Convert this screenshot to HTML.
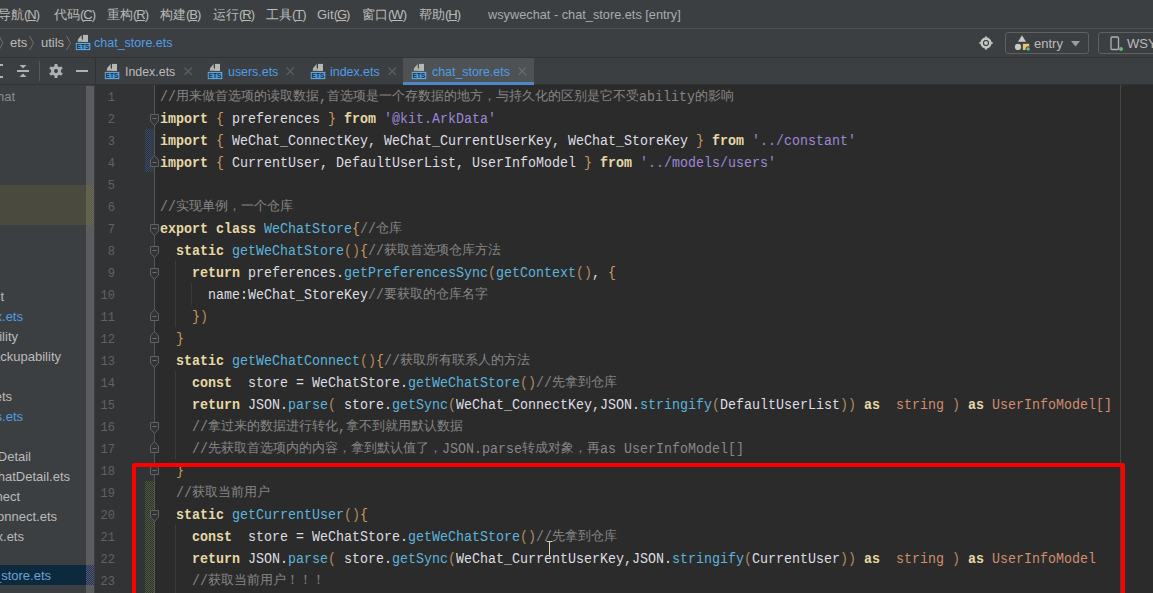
<!DOCTYPE html>
<html><head><meta charset="utf-8">
<style>
*{margin:0;padding:0;box-sizing:border-box}
html,body{width:1153px;height:593px;overflow:hidden;background:#3c3f41}
body{position:relative;font-family:"Liberation Sans",sans-serif;font-size:13px;color:#bbbbbb}
.a{position:absolute;white-space:pre}
.r{position:absolute}
.mi{top:7px;height:16px;line-height:16px;font-size:13px;color:#bbbbbb}
.mi span{letter-spacing:-1px}
.cl{position:absolute;left:0;width:1153px;height:22px}
.cl .a{top:1px;height:22px;line-height:22px;font-family:"Liberation Mono",monospace;font-size:13.333px;letter-spacing:0;transform:scaleY(1.14);transform-origin:0 14.5px}
.ln{position:absolute;margin-top:1px;left:90px;width:25px;height:22px;line-height:22px;text-align:right;font-family:"Liberation Mono",monospace;font-size:12px;color:#606366}
.i{color:#dcdee2}
.c{color:#868686}
.k{color:#e6d9a6;font-weight:bold}
.b{color:#cf9a5b}
.p{color:#b58a5e}
.s{color:#9d87d8}
.f{color:#5cb4dc}
.t{color:#cf8e6d}
.cl .cj{top:0;font-size:13px;font-weight:normal;letter-spacing:0;transform:none}
i{font-style:normal;display:inline-block;width:13px;text-align:left}
.tt{position:absolute;top:63px;height:18px;line-height:18px;font-size:12.4px;white-space:pre}
.pi{position:absolute;margin-top:1px;right:auto;height:20px;line-height:20px;font-size:13px;color:#bbbbbb;white-space:pre;text-align:right}
.blue{color:#4e9ee6}
svg{position:absolute;overflow:visible}
</style></head><body>
<svg width="0" height="0" style="left:0;top:0">
<defs>
<symbol id="ets" viewBox="0 0 16 17">
<path d="M3 5.2 L6.7 1 V5.3 H7.6 V6.1 H3 Z" fill="#b5b8b3"/>
<rect x="8" y="0.9" width="5" height="6.9" fill="#b5b8b3"/>
<rect x="2.8" y="6.1" width="10.2" height="1.7" fill="#b5b8b3"/>
<rect x="1.3" y="9.4" width="13.5" height="6.2" fill="#4b9ad8" stroke="#5cb0ec" stroke-width="1"/>
<text x="8" y="14.9" font-family="Liberation Sans" font-weight="bold" font-size="6.6" fill="#263040" text-anchor="middle">ETS</text>
</symbol>
<symbol id="fm-open" viewBox="0 0 10 12">
<path d="M0.5 0.5 H8.5 V7 L4.5 11.5 L0.5 7 Z" fill="#313335" stroke="#606264" stroke-width="1"/>
<path d="M2.5 4.5 H6.5" stroke="#6c6e70" stroke-width="1"/>
</symbol>
<symbol id="fm-close" viewBox="0 0 10 12">
<path d="M0.5 11.5 H8.5 V5 L4.5 0.5 L0.5 5 Z" fill="#313335" stroke="#606264" stroke-width="1"/>
<path d="M2.5 7.5 H6.5" stroke="#6c6e70" stroke-width="1"/>
</symbol>
</defs>
</svg>
<!-- menubar -->
<div class="r" style="left:0;top:0;width:1153px;height:28px;background:#3c3f41"></div>
<div class="r" style="left:0;top:28px;width:1153px;height:1px;background:#4d5052"></div>
<div class="r" style="left:0;top:57px;width:1153px;height:1px;background:#323232"></div>
<div class="a mi" style="left:-2px"><i>导</i><i>航</i><span>(<u>N</u>)</span></div>
<div class="a mi" style="left:54px"><i>代</i><i>码</i><span>(<u>C</u>)</span></div>
<div class="a mi" style="left:107px"><i>重</i><i>构</i><span>(<u>R</u>)</span></div>
<div class="a mi" style="left:160px"><i>构</i><i>建</i><span>(<u>B</u>)</span></div>
<div class="a mi" style="left:213px"><i>运</i><i>行</i><span>(<u>R</u>)</span></div>
<div class="a mi" style="left:266px"><i>工</i><i>具</i><span>(<u>T</u>)</span></div>
<div class="a mi" style="left:317px">Git<span>(<u>G</u>)</span></div>
<div class="a mi" style="left:362px"><i>窗</i><i>口</i><span>(<u>W</u>)</span></div>
<div class="a mi" style="left:419px"><i>帮</i><i>助</i><span>(<u>H</u>)</span></div>
<div class="a mi" style="left:488px;color:#a9abad;font-size:12.75px">wsywechat - chat_store.ets [entry]</div>
<!-- navbar -->
<svg style="left:0;top:35px" width="6" height="16"><path d="M-1 1 L3 8 L-1 15" fill="none" stroke="#6e7072" stroke-width="1"/></svg>
<div class="a" style="left:10px;top:35px;line-height:16px;color:#bbbbbb">ets</div>
<svg style="left:29px;top:35px" width="6" height="16"><path d="M0.5 1 L4.5 8 L0.5 15" fill="none" stroke="#6e7072" stroke-width="1"/></svg>
<div class="a" style="left:41px;top:35px;line-height:16px;color:#bbbbbb">utils</div>
<svg style="left:66px;top:35px" width="6" height="16"><path d="M0.5 1 L4.5 8 L0.5 15" fill="none" stroke="#6e7072" stroke-width="1"/></svg>
<svg style="left:75px;top:34px" width="16" height="17"><use href="#ets"/></svg>
<div class="a blue" style="left:94px;top:35px;line-height:16px;font-size:12.5px">chat_store.ets</div>
<!-- right nav items -->
<svg style="left:979px;top:36px" width="14" height="14" viewBox="0 0 14 14">
<circle cx="7" cy="7" r="4.3" fill="none" stroke="#c4c6c4" stroke-width="2.7"/>
<circle cx="7" cy="7" r="2.5" fill="none" stroke="#3a3a36" stroke-width="0.8"/>
<circle cx="7" cy="7" r="2" fill="#c4c6c4"/>
<path d="M7 0.2 V2 M7 12 V13.8 M0.2 7 H2 M12 7 H13.8" stroke="#c4c6c4" stroke-width="1.5"/>
</svg>
<div class="r" style="left:1005px;top:32px;width:84px;height:22px;border:1px solid #5e6062;border-radius:3px"></div>
<svg style="left:1014px;top:35px" width="18" height="17" viewBox="0 0 18 17">
<path d="M8 0.2 L12 6.7 H4 Z" fill="#c8cac8"/>
<circle cx="4" cy="11.9" r="3.1" fill="#c8cac8"/>
<rect x="8.9" y="8.8" width="6.3" height="6.2" fill="#f0c070"/>
<circle cx="14.1" cy="14" r="2.2" fill="#5fbf8a" stroke="#23282a" stroke-width="0.8"/>
</svg>
<div class="a" style="left:1034px;top:36px;line-height:16px;color:#bbbbbb">entry</div>
<svg style="left:1071px;top:41px" width="9" height="6"><path d="M0 0 H9 L4.5 5.5 Z" fill="#9a9c9e"/></svg>
<div class="r" style="left:1098px;top:32px;width:70px;height:22px;border:1px solid #5e6062;border-radius:3px"></div>
<svg style="left:1110px;top:36px" width="14" height="15" viewBox="0 0 14 15">
<rect x="1" y="1" width="7.5" height="12.5" rx="1" fill="none" stroke="#afb1b3" stroke-width="1.3"/>
<circle cx="11" cy="13" r="2" fill="#5fb878"/>
</svg>
<div class="a" style="left:1127px;top:36px;line-height:16px;color:#bbbbbb">WSY</div>
<!-- toolrow: project toolbar -->
<div class="r" style="left:-2px;top:64px;width:5px;height:2px;background:#afb1b3"></div>
<div class="r" style="left:-2px;top:76px;width:5px;height:2px;background:#afb1b3"></div>
<svg style="left:16px;top:64px" width="14" height="14" viewBox="0 0 14 14">
<path d="M3.5 1 H10.5 L7 4.5 Z" fill="#afb1b3"/>
<rect x="1" y="6" width="12" height="2" fill="#afb1b3"/>
<path d="M3.5 13 H10.5 L7 9.5 Z" fill="#afb1b3"/>
</svg>
<div class="r" style="left:39px;top:61px;width:1px;height:20px;background:#555758"></div>
<svg style="left:49px;top:64px" width="14" height="14" viewBox="0 0 14 14">
<g fill="#afb1b3"><circle cx="7" cy="7" r="5"/>
<rect x="5.5" y="0" width="3" height="14" rx="0.6"/>
<rect x="5.5" y="0" width="3" height="14" rx="0.6" transform="rotate(60 7 7)"/>
<rect x="5.5" y="0" width="3" height="14" rx="0.6" transform="rotate(120 7 7)"/></g>
<circle cx="7" cy="7" r="2" fill="#3c3f41"/>
</svg>
<div class="r" style="left:76px;top:70px;width:12px;height:2px;background:#afb1b3"></div>
<div class="r" style="left:95px;top:58px;width:1px;height:26px;background:#323232"></div>
<!-- tabs -->
<svg style="left:104px;top:63px" width="16" height="17"><use href="#ets"/></svg>
<div class="tt" style="left:125px;color:#bbbbbb">Index.ets</div>
<svg style="left:184px;top:67px" width="9" height="9"><path d="M0.5 0.5 L8 8 M8 0.5 L0.5 8" stroke="#5d5f61" stroke-width="1.1"/></svg>
<svg style="left:207px;top:63px" width="16" height="17"><use href="#ets"/></svg>
<div class="tt blue" style="left:228px">users.ets</div>
<svg style="left:286px;top:67px" width="9" height="9"><path d="M0.5 0.5 L8 8 M8 0.5 L0.5 8" stroke="#5d5f61" stroke-width="1.1"/></svg>
<svg style="left:310px;top:63px" width="16" height="17"><use href="#ets"/></svg>
<div class="tt blue" style="left:330px">index.ets</div>
<svg style="left:388px;top:67px" width="9" height="9"><path d="M0.5 0.5 L8 8 M8 0.5 L0.5 8" stroke="#5d5f61" stroke-width="1.1"/></svg>
<div class="r" style="left:403px;top:58px;width:131px;height:24px;background:#4e5254"></div>
<svg style="left:411px;top:63px" width="16" height="17"><use href="#ets"/></svg>
<div class="tt blue" style="left:432px">chat_store.ets</div>
<svg style="left:518px;top:67px" width="9" height="9"><path d="M0.5 0.5 L8 8 M8 0.5 L0.5 8" stroke="#6b6d6f" stroke-width="1.1"/></svg>
<!-- project panel -->
<div class="r" style="left:0;top:84px;width:95px;height:509px;background:#3c3f41"></div>
<div class="r" style="left:0;top:185px;width:86px;height:40px;background:#4b4a3e"></div>
<div class="r" style="left:0;top:565px;width:86px;height:20px;background:#0d293e"></div>
<div class="r" style="left:86px;top:86px;width:8px;height:507px;background:#5a5c5e"></div>
<div class="r" style="left:86px;top:185px;width:8px;height:40px;background:repeating-conic-gradient(#706a50 0 25%,#55584e 0 50%) 0 0/2px 2px"></div>
<div class="r" style="left:86px;top:565px;width:8px;height:20px;background:repeating-conic-gradient(#4a5a80 0 25%,#2c3444 0 50%) 0 0/2px 2px"></div>
<div class="pi" style="right:1138px;top:86px;color:#8c8c8c">wsywechat</div>
<div class="pi" style="right:1149px;top:286px">EntryAbilit</div>
<div class="pi" style="right:1130px;top:306px;color:#4e9ee6">index.ets</div>
<div class="pi" style="right:1135px;top:326px">entryability</div>
<div class="pi" style="right:1092px;top:346px">entrybackupability</div>
<div class="pi" style="right:1141px;top:386px">ets</div>
<div class="pi" style="right:1130px;top:406px;color:#4e9ee6">users.ets</div>
<div class="pi" style="right:1122px;top:446px">ChatDetail</div>
<div class="pi" style="right:1083px;top:466px">ChatDetail.ets</div>
<div class="pi" style="right:1133px;top:486px">Connect</div>
<div class="pi" style="right:1096px;top:506px">Connect.ets</div>
<div class="pi" style="right:1129px;top:526px">index.ets</div>
<div class="pi" style="right:1102px;top:565px;color:#6aa3d8">chat_store.ets</div>
<!-- editor -->
<div class="r" style="left:95px;top:84px;width:60px;height:509px;background:#313335"></div>
<div class="r" style="left:155px;top:84px;width:998px;height:509px;background:#2b2b2b"></div>
<div class="r" style="left:154px;top:84px;width:1px;height:509px;background:#555555"></div>
<div class="r" style="left:1120px;top:84px;width:1px;height:509px;background:#46463f"></div>
<div class="r" style="left:145px;top:129px;width:9px;height:43px;background:repeating-conic-gradient(#38496a 0 25%,#2c3037 0 50%) 0 0/2px 2px"></div>
<div class="r" style="left:145px;top:481px;width:9px;height:112px;background:repeating-conic-gradient(#4b5a3f 0 25%,#2f332b 0 50%) 0 0/2px 2px"></div>
<div class="r" style="left:0;top:84px;width:1153px;height:1px;background:#323232"></div>
<div class="r" style="left:403px;top:82px;width:131px;height:3px;background:#4a88c7"></div>
<div class="r" style="left:175px;top:525px;width:1px;height:88px;background:#393b3d"></div>
<div class="r" style="left:175px;top:371px;width:1px;height:88px;background:#393b3d"></div>
<div class="r" style="left:191px;top:283px;width:1px;height:22px;background:#393b3d"></div>
<div class="r" style="left:175px;top:261px;width:1px;height:66px;background:#393b3d"></div>
<svg style="left:150px;top:114px" width="10" height="12"><use href="#fm-open"/></svg>
<svg style="left:150px;top:155px" width="10" height="12"><use href="#fm-close"/></svg>
<svg style="left:150px;top:224px" width="10" height="12"><use href="#fm-open"/></svg>
<svg style="left:150px;top:246px" width="10" height="12"><use href="#fm-open"/></svg>
<svg style="left:150px;top:268px" width="10" height="12"><use href="#fm-open"/></svg>
<svg style="left:150px;top:309px" width="10" height="12"><use href="#fm-close"/></svg>
<svg style="left:150px;top:331px" width="10" height="12"><use href="#fm-close"/></svg>
<svg style="left:150px;top:356px" width="10" height="12"><use href="#fm-open"/></svg>
<svg style="left:150px;top:422px" width="10" height="12"><use href="#fm-open"/></svg>
<svg style="left:150px;top:441px" width="10" height="12"><use href="#fm-close"/></svg>
<svg style="left:150px;top:463px" width="10" height="12"><use href="#fm-close"/></svg>
<svg style="left:150px;top:510px" width="10" height="12"><use href="#fm-open"/></svg>
<div class="cl" style="top:86px"><span class="a c" style="left:160px">//</span><span class="a c cj" style="left:176px"><i>用</i><i>来</i><i>做</i><i>首</i><i>选</i><i>项</i><i>的</i><i>读</i><i>取</i><i>数</i><i>据</i></span><span class="a c" style="left:319px">,</span><span class="a c cj" style="left:327px"><i>首</i><i>选</i><i>项</i><i>是</i><i>一</i><i>个</i><i>存</i><i>数</i><i>据</i><i>的</i><i>地</i><i>方</i><i>，</i><i>与</i><i>持</i><i>久</i><i>化</i><i>的</i><i>区</i><i>别</i><i>是</i><i>它</i><i>不</i><i>受</i></span><span class="a c" style="left:639px">ability</span><span class="a c cj" style="left:695px"><i>的</i><i>影</i><i>响</i></span></div>
<div class="ln" style="top:86px">1</div>
<div class="cl" style="top:108px"><span class="a k" style="left:160px">import</span><span class="a b" style="left:216px">{</span><span class="a i" style="left:224px"> preferences </span><span class="a b" style="left:328px">}</span><span class="a k" style="left:344px">from</span><span class="a s" style="left:384px">&#x27;@kit.ArkData&#x27;</span></div>
<div class="ln" style="top:108px">2</div>
<div class="cl" style="top:130px"><span class="a k" style="left:160px">import</span><span class="a b" style="left:216px">{</span><span class="a i" style="left:224px"> WeChat_ConnectKey, WeChat_CurrentUserKey, WeChat_StoreKey </span><span class="a b" style="left:696px">}</span><span class="a k" style="left:712px">from</span><span class="a s" style="left:752px">&#x27;../constant&#x27;</span></div>
<div class="ln" style="top:130px">3</div>
<div class="cl" style="top:152px"><span class="a k" style="left:160px">import</span><span class="a b" style="left:216px">{</span><span class="a i" style="left:224px"> CurrentUser, DefaultUserList, UserInfoModel </span><span class="a b" style="left:584px">}</span><span class="a k" style="left:600px">from</span><span class="a s" style="left:640px">&#x27;../models/users&#x27;</span></div>
<div class="ln" style="top:152px">4</div>
<div class="cl" style="top:174px"></div>
<div class="ln" style="top:174px">5</div>
<div class="cl" style="top:196px"><span class="a c" style="left:160px">//</span><span class="a c cj" style="left:176px"><i>实</i><i>现</i><i>单</i><i>例</i><i>，</i><i>一</i><i>个</i><i>仓</i><i>库</i></span></div>
<div class="ln" style="top:196px">6</div>
<div class="cl" style="top:218px"><span class="a k" style="left:160px">export</span><span class="a k" style="left:216px">class</span><span class="a f" style="left:264px">WeChatStore</span><span class="a b" style="left:352px">{</span><span class="a c" style="left:360px">//</span><span class="a c cj" style="left:376px"><i>仓</i><i>库</i></span></div>
<div class="ln" style="top:218px">7</div>
<div class="cl" style="top:240px"><span class="a k" style="left:176px">static</span><span class="a f" style="left:232px">getWeChatStore</span><span class="a p" style="left:344px">()</span><span class="a b" style="left:360px">{</span><span class="a c" style="left:368px">//</span><span class="a c cj" style="left:384px"><i>获</i><i>取</i><i>首</i><i>选</i><i>项</i><i>仓</i><i>库</i><i>方</i><i>法</i></span></div>
<div class="ln" style="top:240px">8</div>
<div class="cl" style="top:262px"><span class="a k" style="left:192px">return</span><span class="a i" style="left:240px"> preferences.</span><span class="a f" style="left:344px">getPreferencesSync</span><span class="a p" style="left:488px">(</span><span class="a f" style="left:496px">getContext</span><span class="a p" style="left:576px">()</span><span class="a i" style="left:592px">, </span><span class="a b" style="left:608px">{</span></div>
<div class="ln" style="top:262px">9</div>
<div class="cl" style="top:284px"><span class="a i" style="left:160px">      name:WeChat_StoreKey</span><span class="a c" style="left:368px">//</span><span class="a c cj" style="left:384px"><i>要</i><i>获</i><i>取</i><i>的</i><i>仓</i><i>库</i><i>名</i><i>字</i></span></div>
<div class="ln" style="top:284px">10</div>
<div class="cl" style="top:306px"><span class="a b" style="left:192px">}</span><span class="a p" style="left:200px">)</span></div>
<div class="ln" style="top:306px">11</div>
<div class="cl" style="top:328px"><span class="a b" style="left:176px">}</span></div>
<div class="ln" style="top:328px">12</div>
<div class="cl" style="top:350px"><span class="a k" style="left:176px">static</span><span class="a f" style="left:232px">getWeChatConnect</span><span class="a p" style="left:360px">()</span><span class="a b" style="left:376px">{</span><span class="a c" style="left:384px">//</span><span class="a c cj" style="left:400px"><i>获</i><i>取</i><i>所</i><i>有</i><i>联</i><i>系</i><i>人</i><i>的</i><i>方</i><i>法</i></span></div>
<div class="ln" style="top:350px">13</div>
<div class="cl" style="top:372px"><span class="a k" style="left:192px">const</span><span class="a i" style="left:232px">  store = WeChatStore.</span><span class="a f" style="left:408px">getWeChatStore</span><span class="a p" style="left:520px">()</span><span class="a c" style="left:536px">//</span><span class="a c cj" style="left:552px"><i>先</i><i>拿</i><i>到</i><i>仓</i><i>库</i></span></div>
<div class="ln" style="top:372px">14</div>
<div class="cl" style="top:394px"><span class="a k" style="left:192px">return</span><span class="a i" style="left:240px"> JSON.</span><span class="a f" style="left:288px">parse</span><span class="a p" style="left:328px">(</span><span class="a i" style="left:336px"> store.</span><span class="a f" style="left:392px">getSync</span><span class="a p" style="left:448px">(</span><span class="a i" style="left:456px">WeChat_ConnectKey,JSON.</span><span class="a f" style="left:640px">stringify</span><span class="a p" style="left:712px">(</span><span class="a i" style="left:720px">DefaultUserList</span><span class="a p" style="left:840px">))</span><span class="a k" style="left:864px">as</span><span class="a t" style="left:896px">string</span><span class="a p" style="left:952px">)</span><span class="a k" style="left:968px">as</span><span class="a t" style="left:992px">UserInfoModel[]</span></div>
<div class="ln" style="top:394px">15</div>
<div class="cl" style="top:416px"><span class="a c" style="left:160px">    //</span><span class="a c cj" style="left:208px"><i>拿</i><i>过</i><i>来</i><i>的</i><i>数</i><i>据</i><i>进</i><i>行</i><i>转</i><i>化</i></span><span class="a c" style="left:338px">,</span><span class="a c cj" style="left:346px"><i>拿</i><i>不</i><i>到</i><i>就</i><i>用</i><i>默</i><i>认</i><i>数</i><i>据</i></span></div>
<div class="ln" style="top:416px">16</div>
<div class="cl" style="top:438px"><span class="a c" style="left:160px">    //</span><span class="a c cj" style="left:208px"><i>先</i><i>获</i><i>取</i><i>首</i><i>选</i><i>项</i><i>内</i><i>的</i><i>内</i><i>容</i><i>，</i><i>拿</i><i>到</i><i>默</i><i>认</i><i>值</i><i>了</i><i>，</i></span><span class="a c" style="left:442px">JSON.parse</span><span class="a c cj" style="left:522px"><i>转</i><i>成</i><i>对</i><i>象</i><i>，</i><i>再</i></span><span class="a c" style="left:600px">as UserInfoModel[]</span></div>
<div class="ln" style="top:438px">17</div>
<div class="cl" style="top:460px"><span class="a b" style="left:176px">}</span></div>
<div class="ln" style="top:460px">18</div>
<div class="cl" style="top:482px"><span class="a c" style="left:160px">  //</span><span class="a c cj" style="left:192px"><i>获</i><i>取</i><i>当</i><i>前</i><i>用</i><i>户</i></span></div>
<div class="ln" style="top:482px">19</div>
<div class="cl" style="top:504px"><span class="a k" style="left:176px">static</span><span class="a f" style="left:232px">getCurrentUser</span><span class="a p" style="left:344px">()</span><span class="a b" style="left:360px">{</span></div>
<div class="ln" style="top:504px">20</div>
<div class="cl" style="top:526px"><span class="a k" style="left:192px">const</span><span class="a i" style="left:232px">  store = WeChatStore.</span><span class="a f" style="left:408px">getWeChatStore</span><span class="a p" style="left:520px">()</span><span class="a c" style="left:536px">//</span><span class="a c cj" style="left:552px"><i>先</i><i>拿</i><i>到</i><i>仓</i><i>库</i></span></div>
<div class="ln" style="top:526px">21</div>
<div class="cl" style="top:548px"><span class="a k" style="left:192px">return</span><span class="a i" style="left:240px"> JSON.</span><span class="a f" style="left:288px">parse</span><span class="a p" style="left:328px">(</span><span class="a i" style="left:336px"> store.</span><span class="a f" style="left:392px">getSync</span><span class="a p" style="left:448px">(</span><span class="a i" style="left:456px">WeChat_CurrentUserKey,JSON.</span><span class="a f" style="left:672px">stringify</span><span class="a p" style="left:744px">(</span><span class="a i" style="left:752px">CurrentUser</span><span class="a p" style="left:840px">))</span><span class="a k" style="left:864px">as</span><span class="a t" style="left:896px">string</span><span class="a p" style="left:952px">)</span><span class="a k" style="left:968px">as</span><span class="a t" style="left:992px">UserInfoModel</span></div>
<div class="ln" style="top:548px">22</div>
<div class="cl" style="top:570px"><span class="a c" style="left:160px">    //</span><span class="a c cj" style="left:208px"><i>获</i><i>取</i><i>当</i><i>前</i><i>用</i><i>户</i><i>！</i><i>！</i><i>！</i></span></div>
<div class="ln" style="top:570px">23</div>
<!-- text cursor (mouse I-beam) -->
<svg style="left:546px;top:541px" width="7" height="15"><path d="M3.5 0.5 V14 M0.5 0.5 H6.5" stroke="#d8d4b0" stroke-width="1"/></svg>
<!-- red box -->
<div class="r" style="left:132px;top:463px;width:993px;height:140px;border:4px solid #ff0000;border-radius:2px"></div>
</body></html>
